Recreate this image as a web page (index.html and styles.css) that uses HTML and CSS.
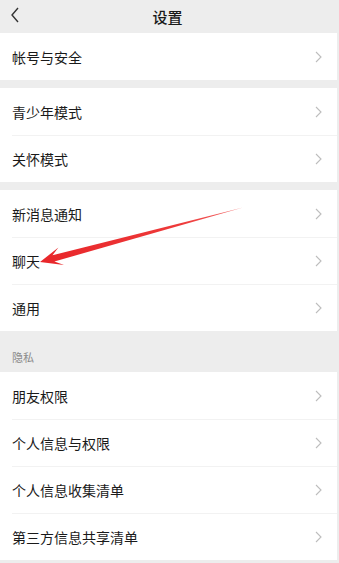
FILE: index.html
```html
<!DOCTYPE html>
<html lang="zh-CN">
<head>
<meta charset="utf-8">
<title>设置</title>
<link rel="stylesheet" href="styles.css">
</head>
<body>
<div class="page">
  <header class="topbar">
    <svg class="back" width="10" height="16" viewBox="0 0 10 16"><polyline points="8,1 2,8 8,15" fill="none" stroke="#333" stroke-width="1.4"/></svg>
    <div class="title">设置</div>
  </header>

  <div class="group">
    <div class="row"><span class="label">帐号与安全</span><svg class="chev" width="7" height="12" viewBox="0 0 7 12"><polyline points="1,1 6,6 1,11" fill="none" stroke="#bdbdbd" stroke-width="1.1"/></svg></div>
  </div>

  <div class="group">
    <div class="row"><span class="label">青少年模式</span><svg class="chev" width="7" height="12" viewBox="0 0 7 12"><polyline points="1,1 6,6 1,11" fill="none" stroke="#bdbdbd" stroke-width="1.1"/></svg></div>
    <div class="row"><span class="label">关怀模式</span><svg class="chev" width="7" height="12" viewBox="0 0 7 12"><polyline points="1,1 6,6 1,11" fill="none" stroke="#bdbdbd" stroke-width="1.1"/></svg></div>
  </div>

  <div class="group">
    <div class="row"><span class="label">新消息通知</span><svg class="chev" width="7" height="12" viewBox="0 0 7 12"><polyline points="1,1 6,6 1,11" fill="none" stroke="#bdbdbd" stroke-width="1.1"/></svg></div>
    <div class="row"><span class="label">聊天</span><svg class="chev" width="7" height="12" viewBox="0 0 7 12"><polyline points="1,1 6,6 1,11" fill="none" stroke="#bdbdbd" stroke-width="1.1"/></svg></div>
    <div class="row"><span class="label">通用</span><svg class="chev" width="7" height="12" viewBox="0 0 7 12"><polyline points="1,1 6,6 1,11" fill="none" stroke="#bdbdbd" stroke-width="1.1"/></svg></div>
  </div>

  <div class="section-title">隐私</div>

  <div class="group last">
    <div class="row"><span class="label">朋友权限</span><svg class="chev" width="7" height="12" viewBox="0 0 7 12"><polyline points="1,1 6,6 1,11" fill="none" stroke="#bdbdbd" stroke-width="1.1"/></svg></div>
    <div class="row"><span class="label">个人信息与权限</span><svg class="chev" width="7" height="12" viewBox="0 0 7 12"><polyline points="1,1 6,6 1,11" fill="none" stroke="#bdbdbd" stroke-width="1.1"/></svg></div>
    <div class="row"><span class="label">个人信息收集清单</span><svg class="chev" width="7" height="12" viewBox="0 0 7 12"><polyline points="1,1 6,6 1,11" fill="none" stroke="#bdbdbd" stroke-width="1.1"/></svg></div>
    <div class="row"><span class="label">第三方信息共享清单</span><svg class="chev" width="7" height="12" viewBox="0 0 7 12"><polyline points="1,1 6,6 1,11" fill="none" stroke="#bdbdbd" stroke-width="1.1"/></svg></div>
  </div>

  <svg class="arrow" width="339" height="563" viewBox="0 0 339 563">
    <defs>
      <linearGradient id="ag" x1="242" y1="208" x2="40" y2="262" gradientUnits="userSpaceOnUse">
        <stop offset="0" stop-color="#f26a6a"/>
        <stop offset="0.3" stop-color="#ee3a3a"/>
        <stop offset="1" stop-color="#e8262a"/>
      </linearGradient>
    </defs>
    <polygon points="243,207.5 52.5,255.3 58.4,247.5 40,262 64,265 54.4,261.5" fill="url(#ag)"/>
  </svg>
</div>
</body>
</html>
```

FILE: styles.css
```css
html, body {
  margin: 0;
  padding: 0;
}
body {
  background: #ededed;
  font-family: "Noto Sans CJK SC", "Noto Sans", sans-serif;
  color: #1a1a1a;
}
.page {
  position: relative;
  width: 339px;
  height: 563px;
  overflow: hidden;
  background: #ededed;
}
.topbar {
  height: 33px;
  display: flex;
  align-items: center;
  justify-content: center;
  position: relative;
}
.back {
  position: absolute;
  left: 10px;
  top: 7px;
}
.title {
  font-size: 15px;
  font-weight: 500;
  color: #1a1a1a;
  line-height: 1;
  margin-left: -4px;
}
.group {
  background: #fff;
  margin-right: 2px;
  margin-bottom: 8px;
}
.group.last {
  margin-bottom: 0;
}
.row {
  height: 47px;
  display: flex;
  align-items: center;
  justify-content: space-between;
  padding: 0 15px 0 12px;
  position: relative;
}
.row + .row::before {
  content: "";
  position: absolute;
  left: 12px;
  right: 0;
  top: 0;
  height: 1px;
  background: #f2f2f2;
}
.label {
  font-size: 14px;
  line-height: 1;
  color: #1a1a1a;
}
.chev {
  display: block;
}
.section-title {
  height: 41px;
  margin-top: -8px;
  box-sizing: border-box;
  padding: 21px 0 0 12px;
  font-size: 11px;
  line-height: 1;
  color: #8a8a8a;
}
.arrow {
  position: absolute;
  left: 0;
  top: 0;
  pointer-events: none;
}
```
